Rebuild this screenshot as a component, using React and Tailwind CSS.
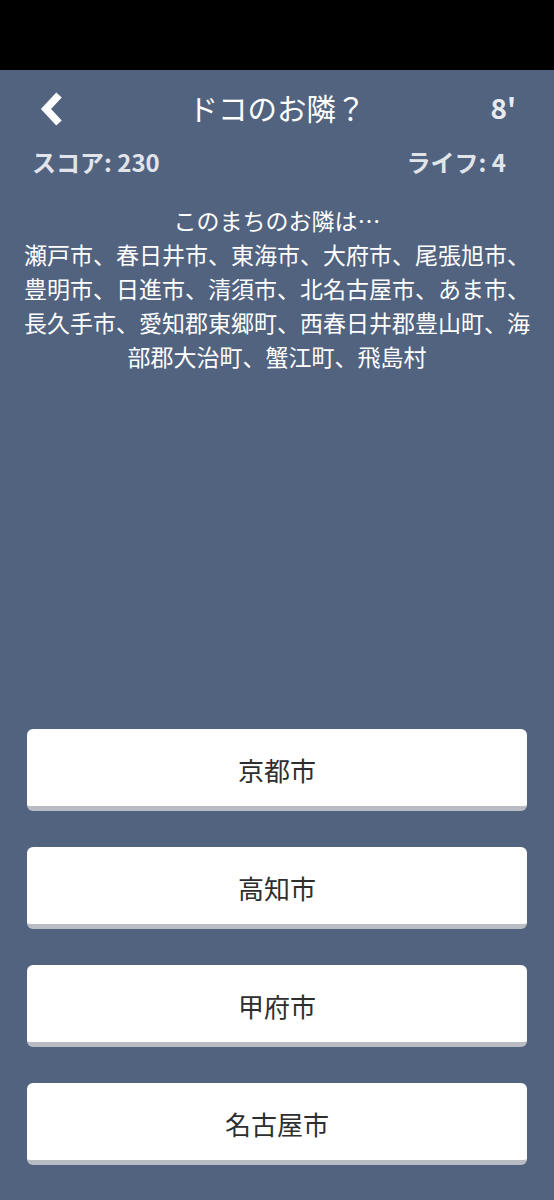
import React from 'react';

const choices = ['京都市', '高知市', '甲府市', '名古屋市'];

export default function App() {
  return (
    <div
      className="h-[1200px] w-full flex flex-col bg-[#51637f] overflow-hidden"
      style={{ fontFamily: '"Noto Sans CJK JP", "Noto Sans", sans-serif' }}
    >
      {/* status bar */}
      <div className="h-[70px] bg-black shrink-0" />

      {/* header */}
      <div className="relative h-[76px] flex items-center justify-center">
        <button className="absolute left-[38px] top-[22px] w-[30px] h-[34px] flex items-center justify-center">
          <svg width="28" height="34" viewBox="0 0 28 34">
            <path d="M20 3 L7 17 L20 31" fill="none" stroke="#ffffff" strokeWidth="7.5" strokeLinejoin="miter" />
          </svg>
        </button>
        <h1 className="text-[29.5px] font-normal text-white leading-none">ドコのお隣？</h1>
        <span className="absolute right-[38px] top-[23px] text-[28px] font-bold text-[#e8ebf0] leading-none">8'</span>
      </div>

      {/* score */}
      <div className="flex justify-between px-[32px] text-[24px] font-bold text-[#e1e4ea] leading-none mt-[4px]">
        <span>スコア: 230</span>
        <span className="pr-[16px]">ライフ: 4</span>
      </div>

      {/* question */}
      <div className="mt-[29px] px-[22px] text-center text-[23px] leading-[34px] text-white">
        <p>このまちのお隣は…</p>
        <p>瀬戸市、春日井市、東海市、大府市、尾張旭市、豊明市、日進市、清須市、北名古屋市、あま市、長久手市、愛知郡東郷町、西春日井郡豊山町、海部郡大治町、蟹江町、飛島村</p>
      </div>

      <div className="flex-1" />

      {/* answers */}
      <div className="flex flex-col gap-[36px] px-[27px] pb-[35px]">
        {choices.map((c) => (
          <button
            key={c}
            className="h-[82px] w-full bg-white rounded-[6px] border-b-[5px] border-[#b9bcc2] pt-[4px] text-[26px] text-[#2e2e2e] flex items-center justify-center"
          >
            {c}
          </button>
        ))}
      </div>
    </div>
  );
}
